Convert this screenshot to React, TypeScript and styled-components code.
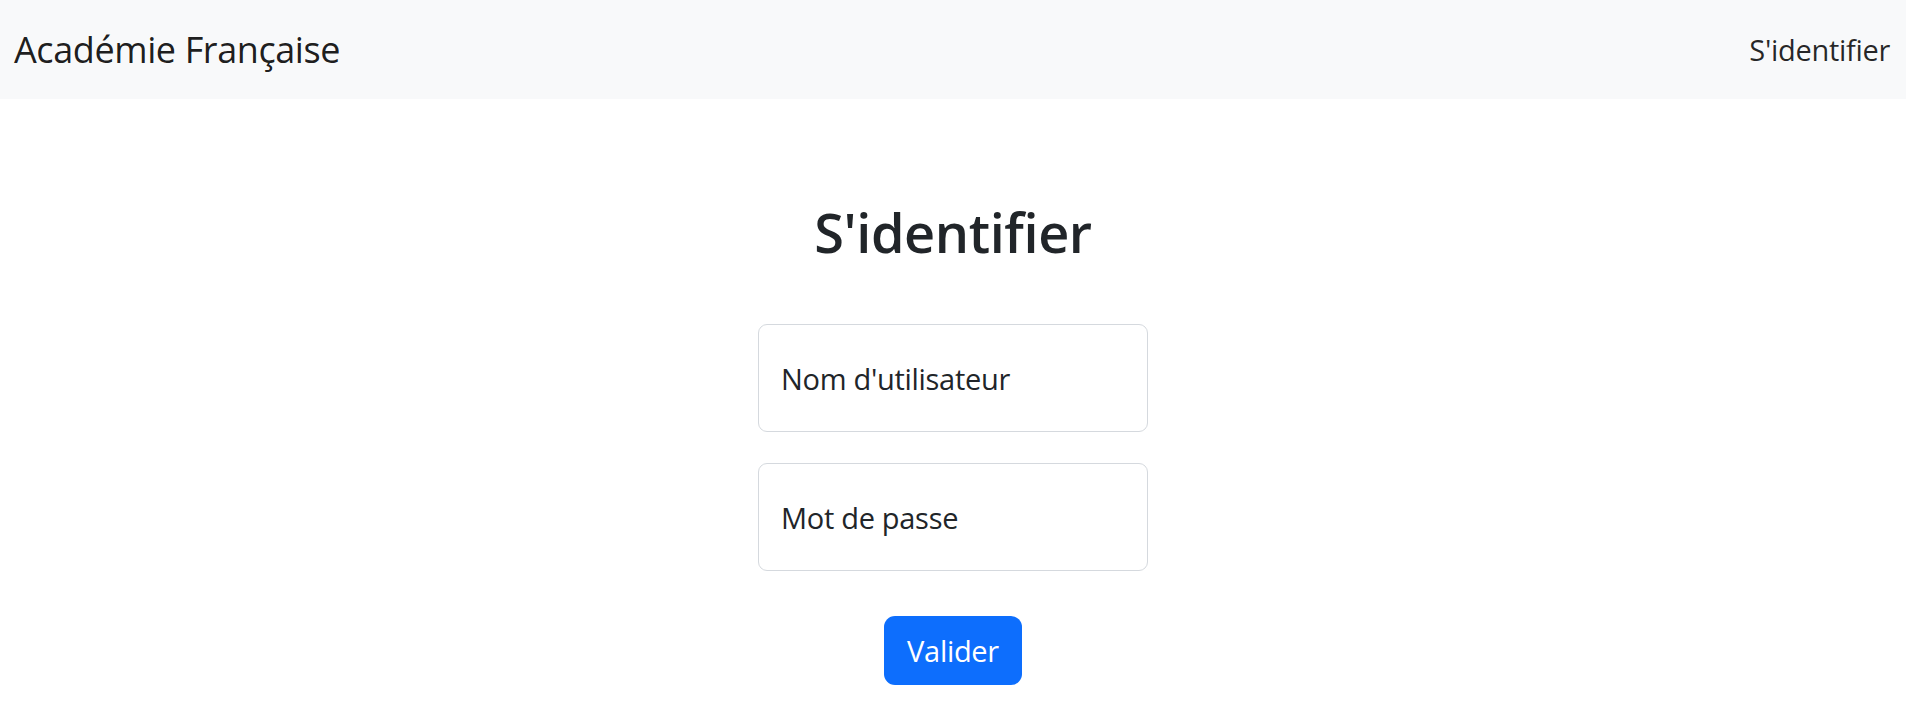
import React from "react";
import styled, { createGlobalStyle } from "styled-components";

const GlobalStyle = createGlobalStyle`
  html, body {
    margin: 0;
    padding: 0;
    background: #ffffff;
    font-family: "Open Sans", "Noto Sans", Arial, sans-serif;
    color: #212529;
  }
  * { box-sizing: border-box; }
`;

const NavBar = styled.nav`
  height: 99px;
  background: #f8f9fa;
  display: flex;
  align-items: center;
  justify-content: space-between;
  padding: 0 16px 0 14px;
`;

const Brand = styled.a`
  font-size: 36px;
  color: rgba(0, 0, 0, 0.9);
  text-decoration: none;
  letter-spacing: -0.4px;
`;

const NavLink = styled.a`
  font-size: 29px;
  color: rgba(0, 0, 0, 0.85);
  text-decoration: none;
  letter-spacing: -0.3px;
`;

const Main = styled.main`
  display: flex;
  flex-direction: column;
  align-items: center;
  padding-top: 97px;
`;

const Title = styled.h1`
  margin: 0 0 56px;
  font-size: 54px;
  line-height: 72px;
  font-weight: 600;
  color: #212529;
  letter-spacing: -0.4px;
`;

const Form = styled.form`
  display: flex;
  flex-direction: column;
  align-items: center;
  gap: 31px;
`;

const Field = styled.div`
  width: 390px;
  height: 108px;
  border: 1px solid #d5d9de;
  border-radius: 9px;
  display: flex;
  align-items: center;
  padding-left: 22px;
  font-size: 29px;
  color: #212529;
  letter-spacing: -0.3px;
`;

const Button = styled.button`
  margin-top: 14px;
  width: 138px;
  height: 69px;
  border: none;
  border-radius: 11px;
  background: #0d6efd;
  color: #ffffff;
  font-family: inherit;
  font-size: 29px;
  letter-spacing: -0.3px;
  cursor: pointer;
`;

export default function App() {
  return (
    <>
      <GlobalStyle />
      <NavBar>
        <Brand href="#">Académie Française</Brand>
        <NavLink href="#">S'identifier</NavLink>
      </NavBar>
      <Main>
        <Title>S'identifier</Title>
        <Form onSubmit={(e) => e.preventDefault()}>
          <Field>Nom d'utilisateur</Field>
          <Field>Mot de passe</Field>
          <Button type="submit">Valider</Button>
        </Form>
      </Main>
    </>
  );
}
